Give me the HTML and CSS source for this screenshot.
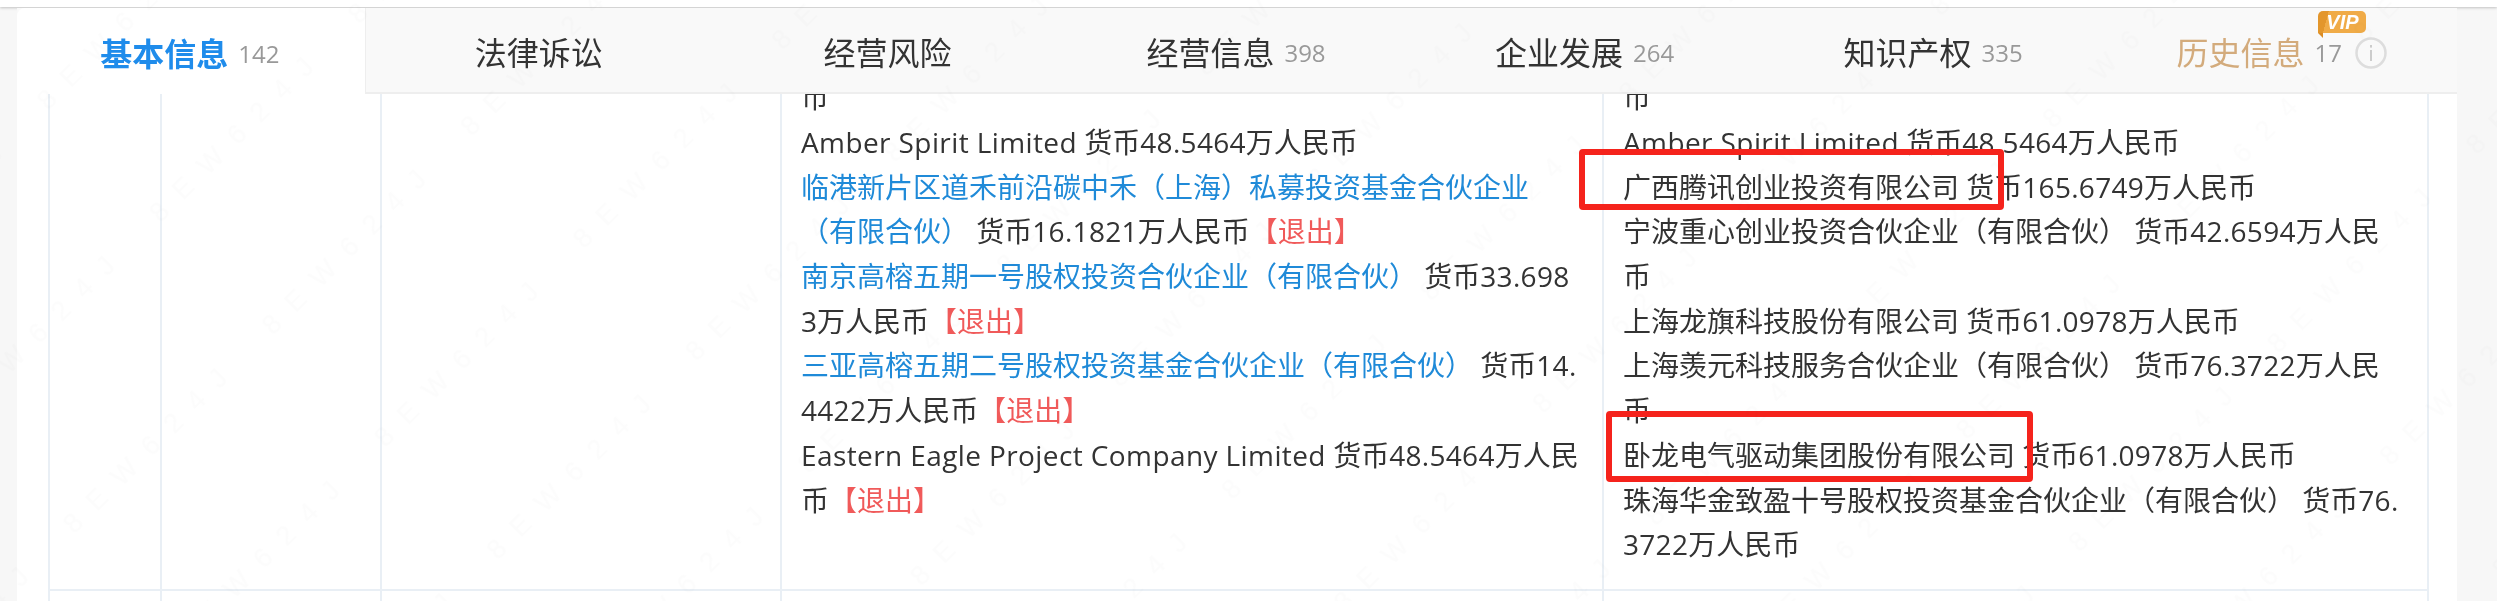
FILE: index.html
```html
<!DOCTYPE html>
<html lang="zh-CN">
   <head>
       <meta charset="UTF-8">
       <title>基本信息</title>
       <link rel="stylesheet" href="styles.css">
   </head>
   <body>
       <div class="topbar"></div>
       <div class="panel">
           <div class="tabs">
               <div class="tab active"><span class="tab-name">基本信息</span><span class="count">142</span></div>
               <div class="tab"><span class="tab-name">法律诉讼</span></div>
               <div class="tab"><span class="tab-name">经营风险</span></div>
               <div class="tab"><span class="tab-name">经营信息</span><span class="count">398</span></div>
               <div class="tab"><span class="tab-name">企业发展</span><span class="count">264</span></div>
               <div class="tab"><span class="tab-name">知识产权</span><span class="count">335</span></div>
               <div class="tab history">
                   <span class="tab-name">历史信息</span><span class="count">17</span>
                   <span class="vip">VIP</span>
                   <svg class="info" viewBox="0 0 32 32" width="32" height="32">
                       <circle cx="16" cy="16" r="14.5" fill="none" stroke="#ddd" stroke-width="2.5"/>
                       <rect x="15" y="13" width="2" height="11" fill="#ccc"/>
                       <rect x="15" y="8" width="2" height="2.6" fill="#ccc"/>
                   </svg>
               </div>
           </div>
           <div class="table-wrap">
               <table class="record">
                   <colgroup>
                       <col class="col-a"><col class="col-b"><col class="col-c"><col class="col-d"><col class="col-e">
                   </colgroup>
                   <tr>
                       <td></td>
                       <td></td>
                       <td></td>
                       <td>
                           币<br>
                           <span class="en">Amber Spirit Limited</span> 货币<span class="num">48.5464</span>万人民币<br>
                           <span class="link">临港新片区道禾前沿碳中禾（上海）私募投资基金合伙企业</span><br>
                           <span class="link">（有限合伙）</span> 货币<span class="num">16.1821</span>万人民币<span class="quit">【退出】</span><br>
                           <span class="link">南京高榕五期一号股权投资合伙企业（有限合伙）</span> 货币<span class="num">33.698</span><br>
                           3万人民币<span class="quit">【退出】</span><br>
                           <span class="link">三亚高榕五期二号股权投资基金合伙企业（有限合伙）</span> 货币<span class="num">14.</span><br>
                           <span class="num">4422</span>万人民币<span class="quit">【退出】</span><br>
                           <span class="en">Eastern Eagle Project Company Limited</span> 货币<span class="num">48.5464</span>万人民<br>
                           币<span class="quit">【退出】</span>
                       </td>
                       <td>
                           币<br>
                           <span class="en">Amber Spirit Limited</span> 货币<span class="num">48.5464</span>万人民币<br>
                           广西腾讯创业投资有限公司 货币<span class="num">165.6749</span>万人民币<br>
                           宁波重心创业投资合伙企业（有限合伙） 货币<span class="num">42.6594</span>万人民<br>
                           币<br>
                           上海龙旗科技股份有限公司 货币<span class="num">61.0978</span>万人民币<br>
                           上海羡元科技服务合伙企业（有限合伙） 货币<span class="num">76.3722</span>万人民<br>
                           币<br>
                           卧龙电气驱动集团股份有限公司 货币<span class="num">61.0978</span>万人民币<br>
                           珠海华金致盈十号股权投资基金合伙企业（有限合伙） 货币<span class="num">76.</span><br>
                           <span class="num">3722</span>万人民币
                       </td>
                   </tr>
                   <tr class="next-row">
                       <td></td><td></td><td></td><td></td><td></td>
                   </tr>
               </table>
           </div>
       </div>

       <!-- red boxes someone drew on the screenshot -->
       <div class="mark mark-one"></div>
       <div class="mark mark-two"></div>

       <!-- faint watermark over the whole page -->
       <svg class="watermark" width="2497" height="601">
           <defs>
               <pattern id="wm" width="281" height="159" patternUnits="userSpaceOnUse" patternTransform="translate(208 288) rotate(-45)">
                   <text x="12" y="80" font-family="Liberation Sans, sans-serif" font-size="27" letter-spacing="17" fill="#000" fill-opacity="0.013">8EW624J</text>
               </pattern>
           </defs>
           <rect width="2497" height="601" fill="url(#wm)"/>
       </svg>
   </body>
</html>
```
FILE: styles.css
```css
html, body {
    margin: 0;
    padding: 0;
    height: 601px;
    overflow: hidden;
}
body {
    display: flex;
    flex-direction: column;
    position: relative;
    background-color: #f7f7f7;
    color: #333;
    font-family: "Open Sans", "Noto Sans CJK SC", sans-serif;
    font-size: 28px;
    line-height: 44.7px;
}
.topbar {
    height: 7px;
    flex: none;
    background-color: #fff;
    box-shadow: 0 1px 3px rgba(0, 0, 0, 0.22);
    position: relative;
}
.panel {
    flex: 1;
    min-height: 0;
    display: flex;
    flex-direction: column;
    margin: 1px 40px 0 17px;
    background-color: #fff;
    filter: blur(0.4px);
}
.tabs {
    display: grid;
    grid-template-columns: repeat(7, 1fr);
    height: 86px;
    flex: none;
    background-color: #f9f9f9;
    border-bottom: 2px solid #eee;
    box-sizing: border-box;
}
.tab {
    display: flex;
    align-items: center;
    justify-content: center;
    gap: 10px;
    position: relative;
    font-size: 32px;
    line-height: 40px;
    padding: 5px 2px 0 0;
}
.tab.active {
    background-color: #fff;
    border-right: 1px solid #eee;
    border-radius: 8px 0 0 0;
    margin-bottom: -2px;
    color: #1f8ceb;
}
.tab.active .tab-name {
    font-weight: bold;
}
.tab.history .tab-name {
    color: #d3ab7c;
}
.count {
    font-size: 24px;
    color: #999;
}
.vip {
    position: absolute;
    left: 210px;
    top: 3px;
    width: 48px;
    height: 22px;
    border-radius: 5px 5px 5px 0;
    background: linear-gradient(105deg, #e3962c 0 20%, #f0ab47 20% 100%);
    color: #fff;
    font-family: "Liberation Sans", sans-serif;
    font-size: 20px;
    font-weight: bold;
    font-style: italic;
    line-height: 22px;
    text-align: center;
}
.vip::after {
    content: "";
    position: absolute;
    left: 0;
    top: 22px;
    border-top: 5px solid #d98c25;
    border-left: 5px solid transparent;
}
.info {
    margin-left: 3px;
}
.table-wrap {
    flex: 1;
    min-height: 0;
    overflow: hidden;
    display: flex;
    flex-direction: column;
    justify-content: flex-end;
    padding-left: 31px;
}
.record {
    flex: none;
    border-collapse: collapse;
    table-layout: fixed;
    width: 2379px;
}
.col-a { width: 112px; }
.col-b { width: 220px; }
.col-c { width: 400px; }
.col-d { width: 822px; }
.col-e { width: 825px; }
.record td {
    border: 2px solid #e9eff5;
    padding: 0 20px 22px 19px;
    vertical-align: top;
    white-space: nowrap;
}
.record .next-row td {
    height: 10px;
    padding: 0;
    border-bottom: 0;
}
.en {
    letter-spacing: 0.4px;
}
.num {
    letter-spacing: 0.3px;
}
.link {
    color: #1f8ad8;
}
.quit {
    color: #f05a5a;
}
.mark {
    position: absolute;
    box-sizing: border-box;
    border: 6px solid #f5231c;
    border-radius: 4px;
}
.mark-one {
    left: 1579px;
    top: 149px;
    width: 425px;
    height: 61px;
}
.mark-two {
    left: 1606px;
    top: 411px;
    width: 427px;
    height: 71px;
}
.watermark {
    position: absolute;
    left: 0;
    top: 0;
    pointer-events: none;
}
```
